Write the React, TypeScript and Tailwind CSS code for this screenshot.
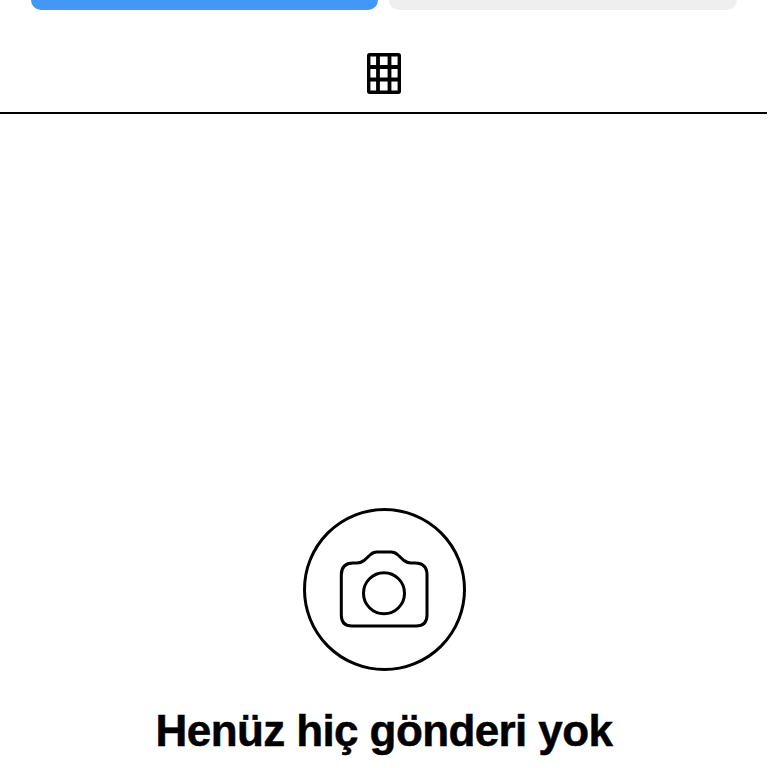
export default function App() {
  return (
    <div className="w-[768px] h-[768px] overflow-hidden bg-white flex flex-col" style={{ fontFamily: '"Liberation Sans", Arial, sans-serif' }}>
      <div className="flex gap-[11px] pl-[31px] pr-[31px] h-[10px] shrink-0">
        <div className="w-[347px] h-full bg-[#4397f7] rounded-b-[12px]" />
        <div className="w-[348px] h-full bg-[#efefef] rounded-b-[12px]" />
      </div>
      <div className="h-[104px] shrink-0 border-b-2 border-black flex justify-center pt-[43px] mr-px">
        <svg width="34" height="41" viewBox="0 0 34 41" fill="none" stroke="#000" strokeWidth="3.4">
          <rect x="1.7" y="1.7" width="30.6" height="37.6" rx="1" />
          <path d="M11 2V39M22.5 2V39M2 14H32M2 26.5H32" strokeWidth="3.8" />
        </svg>
      </div>
      <div className="flex justify-center pt-[394px] shrink-0">
        <div className="w-[163px] h-[163px] rounded-full border-[3px] border-black flex items-center justify-center">
          <svg width="91" height="81" viewBox="0 0 91 81" fill="none" stroke="#000" strokeWidth="3">
            <path d="M2.3 26Q2.3 14 14 14H18Q22 14 25 11.5L31 6Q34 3 38 3H52Q56 3 59 6L65 11.5Q68 14 72 14H76Q88 14 88 26V66Q88 77 77 77H13Q2.3 77 2.3 66Z" />
            <circle cx="45" cy="44.3" r="20.5" />
          </svg>
        </div>
      </div>
      <h1 className="mt-[34px] text-center text-[44px] leading-[52px] font-bold text-black tracking-[-0.6px] whitespace-nowrap [-webkit-text-stroke:0.5px_black]">Henüz hiç gönderi yok</h1>
    </div>
  );
}
